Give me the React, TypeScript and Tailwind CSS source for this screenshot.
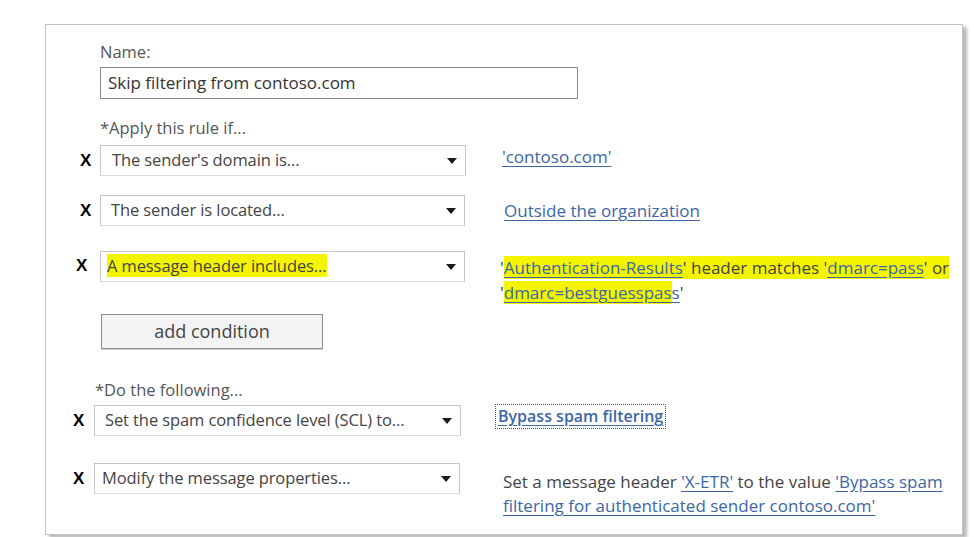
import React from 'react';

const font = { fontFamily: '"Open Sans", "Noto Sans", sans-serif' };

const Arrow = () => (
  <svg width="10" height="6" viewBox="0 0 10 6" className="shrink-0">
    <path d="M0 0h10L5 6z" fill="#1a1a1a" />
  </svg>
);

const Select = ({ label, className = '' }: { label: React.ReactNode; className?: string }) => (
  <div
    className={`flex items-center justify-between h-[31px] border border-[#c6c6c6] border-b-[#dcdcdc] bg-white pr-[8px] ${className}`}
  >
    <span className="text-[16.5px] text-[#444] whitespace-nowrap tracking-[-0.1px]">{label}</span>
    <Arrow />
  </div>
);

const X = ({ className = '' }: { className?: string }) => (
  <span className={`text-[17px] font-bold text-black leading-none ${className}`} style={{ fontFamily: '"Liberation Sans", sans-serif' }}>
    X
  </span>
);

const Link = ({ children }: { children: React.ReactNode }) => (
  <span className="text-[#3c66a8] underline decoration-[#3c66a8] underline-offset-[3px]">{children}</span>
);

const Hl = ({ children }: { children: React.ReactNode }) => <span className="bg-[#f4f400]">{children}</span>;

export default function App() {
  return (
    <div className="w-[974px] h-[537px] bg-white overflow-hidden pt-[24px] pl-[45px]" style={font}>
      <div className="w-[918px] h-[511px] border border-[#c4c4c4] shadow-[4px_3px_3px_rgba(0,0,0,0.28)] bg-white flex flex-col">
        {/* name */}
        <div className="ml-[54px] mt-[17px] h-[20px] text-[16.5px] leading-[20px] text-[#555]">Name:</div>
        <div className="ml-[54px] mt-[5px] w-[478px] h-[32px] shrink-0 border border-[#8a8a8a] flex items-center pl-[7px] text-[17px] text-[#333]">
          Skip filtering from contoso.com
        </div>

        <div className="ml-[54px] mt-[19px] h-[20px] text-[16.5px] leading-[20px] text-[#555]">*Apply this rule if...</div>

        {/* condition rows */}
        <div className="flex items-start mt-[7px] h-[50px] shrink-0">
          <X className="ml-[34px] mt-[7px] w-[20px]" />
          <Select label="The sender's domain is..." className="w-[366px] pl-[11px]" />
          <div className="ml-[36px] mt-[0px] text-[17px] leading-[24px] whitespace-nowrap">
            <Link>'contoso.com'</Link>
          </div>
        </div>

        <div className="flex items-start h-[56px] shrink-0">
          <X className="ml-[34px] mt-[7px] w-[20px]" />
          <Select label="The sender is located..." className="w-[365px] pl-[10px]" />
          <div className="ml-[39px] mt-[4px] text-[17px] leading-[24px] whitespace-nowrap">
            <Link>Outside the organization</Link>
          </div>
        </div>

        <div className="flex items-start h-[63px] shrink-0">
          <X className="ml-[30px] mt-[6px] w-[24px]" />
          <Select label={<Hl>A message header includes...</Hl>} className="w-[365px] pl-[6px]" />
          <div className="ml-[35px] mt-[4px] text-[17px] leading-[25px] text-[#444] whitespace-nowrap">
            '<Hl><Link>Authentication-Results</Link>' header matches '<Link>dmarc=pass</Link>' or</Hl>
            <br />'<Hl><Link>dmarc=bestguesspas</Link></Hl><Link>s</Link>'
          </div>
        </div>

        <button
          className="ml-[55px] w-[222px] h-[35px] shrink-0 bg-[#f3f3f3] border border-[#8f8f8f] text-[18px] text-[#444] shadow-[0_1px_0_#d0d0d0]"
          style={font}
        >
          add condition
        </button>

        <div className="ml-[49px] mt-[31px] h-[20px] text-[16.5px] leading-[20px] text-[#555]">*Do the following...</div>

        <div className="flex items-start mt-[5px] h-[58px] shrink-0">
          <X className="ml-[27px] mt-[7px] w-[21px]" />
          <Select label="Set the spam confidence level (SCL) to..." className="w-[367px] pl-[10px]" />
          <div className="ml-[36px] mt-[1px] text-[16px] leading-[21px] font-semibold whitespace-nowrap outline-1 outline-dotted outline-[#555] outline-offset-[1px] px-[1px]">
            <Link>Bypass spam filtering</Link>
          </div>
        </div>

        <div className="flex items-start shrink-0">
          <X className="ml-[27px] mt-[7px] w-[21px]" />
          <Select label="Modify the message properties..." className="w-[366px] pl-[7px]" />
          <div className="ml-[43px] mt-[7px] text-[17px] leading-[24px] text-[#444] whitespace-nowrap">
            Set a message header <Link>'X-ETR'</Link> to the value <Link>'Bypass spam</Link>
            <br />
            <Link>filtering for authenticated sender contoso.com'</Link>
          </div>
        </div>
      </div>
    </div>
  );
}
